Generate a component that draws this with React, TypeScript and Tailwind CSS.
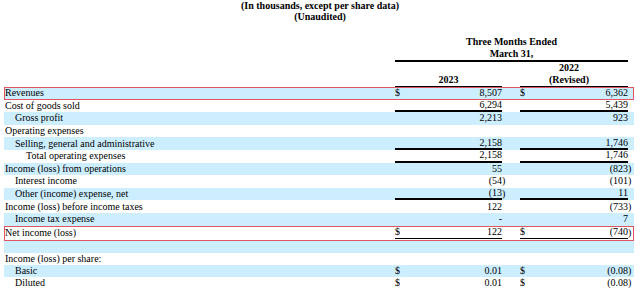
type Row = {
  label: string;
  indent?: 0 | 1 | 2;
  a?: string;
  b?: string;
  dollar?: boolean;
  blue?: boolean;
  line?: "single" | "double";
  boxed?: boolean;
  h?: string;
};

const rows: Row[] = [
  { label: "Revenues", a: "8,507", b: "6,362", dollar: true, blue: true, boxed: true },
  { label: "Cost of goods sold", a: "6,294", b: "5,439", line: "single" },
  { label: "Gross profit", indent: 1, a: "2,213", b: "923", blue: true },
  { label: "Operating expenses" },
  { label: "Selling, general and administrative", indent: 1, a: "2,158", b: "1,746", blue: true, line: "single" },
  { label: "Total operating expenses", indent: 2, a: "2,158", b: "1,746", line: "single" },
  { label: "Income (loss) from operations", a: "55", b: "(823)", blue: true },
  { label: "Interest income", indent: 1, a: "(54)", b: "(101)" },
  { label: "Other (income) expense, net", indent: 1, a: "(13)", b: "11", blue: true, line: "single" },
  { label: "Income (loss) before income taxes", a: "122", b: "(733)" },
  { label: "Income tax expense", indent: 1, a: "-", b: "7", blue: true },
  { label: "Net income (loss)", a: "122", b: "(740)", dollar: true, boxed: true, line: "double", h: "h-[15px]" },
  { label: "", blue: true, h: "h-[12px]" },
  { label: "Income (loss) per share:", h: "h-[12px]" },
  { label: "Basic", indent: 1, a: "0.01", b: "(0.08)", dollar: true, blue: true, h: "h-[12px]" },
  { label: "Diluted", indent: 1, a: "0.01", b: "(0.08)", dollar: true, h: "h-[12px]" },
  { label: "", blue: true, h: "h-[12px]" },
];

const indents = ["pl-[1px]", "pl-[11px]", "pl-[22px]"];

function Value({ v, dollar, line, width }: { v?: string; dollar?: boolean; line?: Row["line"]; width: string }) {
  const paren = v?.endsWith(")");
  const body = paren ? v!.slice(0, -1) : v;
  const border =
    line === "double" ? "border-b-[3px] border-double border-black" : line === "single" ? "border-b-2 border-black" : "";
  return (
    <>
      <div className={`${width} flex h-full items-center justify-between ${border}`}>
        <span>{dollar ? "$" : ""}</span>
        <span>{body}</span>
      </div>
      <div className="w-[4px]">{paren ? ")" : ""}</div>
    </>
  );
}

export default function App() {
  return (
    <div className="h-[288px] w-[640px] overflow-hidden bg-white text-[10px] leading-[12px] text-black [font-family:'Liberation_Serif',serif]">
      <div className="text-center font-bold">
        <p>(In thousands, except per share data)</p>
        <p className="-mt-[1px]">(Unaudited)</p>
      </div>
      <div className="mt-[13px] ml-[4px] flex w-[630px]">
        <div className="w-[391px]" />
        <div className="flex w-[233px] flex-col font-bold">
          <div className="border-b-2 border-black text-center">
            <p>Three Months Ended</p>
            <p>March 31,</p>
          </div>
          <div className="flex items-end">
            <div className="w-[107px] border-b border-black text-center">2023</div>
            <div className="w-[18px]" />
            <div className="w-[108px] border-b border-black pr-[10px] text-center">
              <p>2022</p>
              <p>(Revised)</p>
            </div>
          </div>
        </div>
      </div>
      <div className="ml-[4px] flex w-[630px] flex-col">
        {rows.map((r, i) => (
          <div
            key={i}
            className={`flex items-center ${r.h ?? "h-[12.6px]"} ${r.blue ? "bg-[#cceeff]" : ""} ${
              r.boxed ? "outline outline-1 -outline-offset-1 outline-[#e05563]" : ""
            }`}
          >
            <div className={`w-[391px] whitespace-nowrap ${indents[r.indent ?? 0]}`}>{r.label}</div>
            <Value v={r.a} dollar={r.dollar} line={r.line} width="w-[107px]" />
            <div className="w-[14px]" />
            <Value v={r.b} dollar={r.dollar} line={r.line} width="w-[108px]" />
          </div>
        ))}
      </div>
    </div>
  );
}
